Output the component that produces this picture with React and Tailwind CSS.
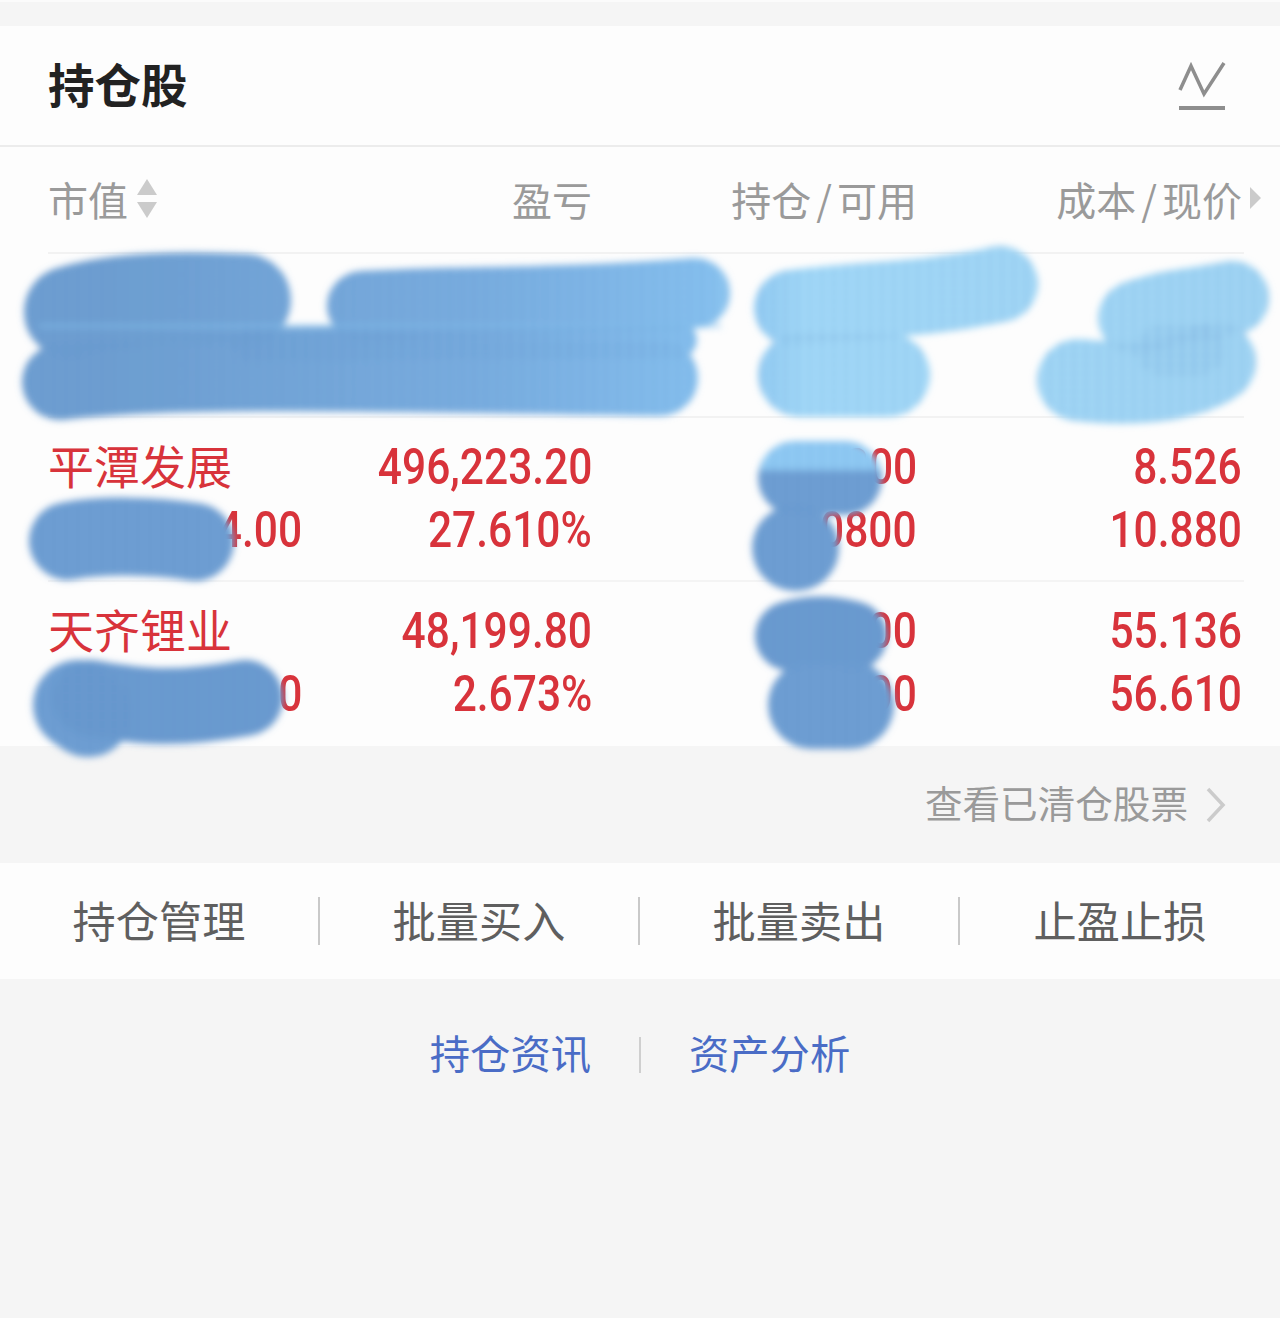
const cjk = "font-['Noto_Sans_CJK_SC','Noto_Sans',sans-serif]"
const figure = "inline-block origin-right scale-x-[0.85] font-['Roboto',sans-serif] text-[50px] font-medium leading-[63px]"

const holdings = [
  { name: '平潭发展', value: '4.00', profit: '496,223.20', rate: '27.610%', held: '800', usable: '0800', cost: '8.526', price: '10.880' },
  { name: '天齐锂业', value: '0', profit: '48,199.80', rate: '2.673%', held: '00', usable: '00', cost: '55.136', price: '56.610' },
]

const actions = ['持仓管理', '批量买入', '批量卖出', '止盈止损']

// thick marker strokes that sit on top of the table
const marks = [
  { d: 'M70 312 C110 300 170 296 245 300', w: 92, paint: 'url(#wash)' },
  { d: 'M362 306 C450 300 560 304 695 293', w: 70, paint: 'url(#wash)' },
  { d: 'M60 382 C160 370 300 372 660 378', w: 76, paint: 'url(#wash)' },
  { d: 'M250 345 L680 340', w: 34, paint: 'url(#wash)' },
  { d: 'M792 308 C850 300 930 300 1000 284', w: 76, paint: 'url(#wash)' },
  { d: 'M800 375 L888 375', w: 84, paint: 'url(#wash)' },
  { d: 'M1135 318 C1170 305 1200 305 1232 298', w: 74, paint: 'url(#wash)' },
  { d: 'M1078 380 C1120 385 1180 385 1215 362', w: 82, paint: 'url(#wash)' },
  { d: 'M1160 350 L1200 350', w: 50, paint: 'url(#wash)' },
  { d: 'M68 541 C100 535 150 535 195 542', w: 78, paint: '#6f9fd3' },
  { d: 'M795 478 L845 478', w: 74, paint: 'url(#band)' },
  { d: 'M795 548 L796 548', w: 86, paint: '#6f9fd3' },
  { d: 'M790 636 C810 630 830 630 852 636', w: 70, paint: '#6c9bd0' },
  { d: 'M812 705 L850 705', w: 88, paint: '#6f9fd3' },
  { d: 'M78 705 L88 712', w: 90, paint: '#6f9fd3' },
  { d: 'M90 698 C130 705 170 712 245 698', w: 76, paint: '#6c9bd0' },
]

const MarkerLayer = () => (
  <svg className="absolute left-0 top-0 pointer-events-none" width="1280" height="1318" viewBox="0 0 1280 1318" fill="none">
    <defs>
      <linearGradient id="wash" gradientUnits="userSpaceOnUse" x1="0" y1="0" x2="1280" y2="0">
        <stop offset="0.08" stopColor="#6f9fd1" />
        <stop offset="0.38" stopColor="#7cafe1" />
        <stop offset="0.55" stopColor="#88c2f0" />
        <stop offset="0.63" stopColor="#a6dcfa" />
        <stop offset="1" stopColor="#a4d8f6" />
      </linearGradient>
      <linearGradient id="band" gradientUnits="userSpaceOnUse" x1="0" y1="440" x2="0" y2="515">
        <stop offset="0.38" stopColor="#93cdf6" />
        <stop offset="0.42" stopColor="#6f9fd3" />
      </linearGradient>
      <pattern id="weave" width="12" height="9" patternUnits="userSpaceOnUse">
        <path d="M0 4.5H12" stroke="#4f86c4" strokeOpacity="0.2" strokeWidth="2" />
        <path d="M6 0V9" stroke="#4f86c4" strokeOpacity="0.2" strokeWidth="3" />
      </pattern>
      <filter id="soft" filterUnits="userSpaceOnUse" x="0" y="0" width="1280" height="1318">
        <feGaussianBlur stdDeviation="3.5" />
      </filter>
    </defs>
    <g filter="url(#soft)" strokeLinecap="round" strokeLinejoin="round">
      {marks.map((mark) => (
        <path key={mark.d} d={mark.d} stroke={mark.paint} strokeWidth={mark.w} />
      ))}
      {marks.map((mark) => (
        <path key={`${mark.d}-weave`} d={mark.d} stroke="url(#weave)" strokeWidth={mark.w} />
      ))}
      <path d="M40 326 H720" stroke="#86c2ee" strokeOpacity="0.7" strokeWidth="3" />
    </g>
  </svg>
)

const Row = ({ item }) => (
  <div className="grid h-[164px] grid-cols-[254px_290px_325px_325px] border-b-2 border-[#f4f4f4] pt-[18px] text-[#d8333b] last:border-b-0">
    <div className="flex flex-col">
      <span className={`${cjk} mb-[6px] text-[46px] leading-[57px]`}>{item.name}</span>
      <div className="text-right">
        <span className={figure}>{item.value}</span>
      </div>
    </div>
    {[[item.profit, item.rate], [item.held, item.usable], [item.cost, item.price]].map(([top, bottom]) => (
      <div key={top} className="flex flex-col text-right">
        <div><span className={figure}>{top}</span></div>
        <div><span className={figure}>{bottom}</span></div>
      </div>
    ))}
  </div>
)

export default function App() {
  return (
    <div className={`${cjk} relative h-[1318px] w-[1280px] overflow-hidden bg-[#f5f5f5]`}>
      <div className="h-[26px] border-t-2 border-[#fbfbfb]" />

      <section className="bg-[#fdfdfd]">
        <header className="flex h-[121px] items-center justify-between border-b-2 border-[#ececec] pl-12 pr-[54px]">
          <h2 className="mb-1 text-[46.5px] font-bold leading-none text-[#222222]">持仓股</h2>
          <svg width="48" height="50" viewBox="0 0 48 50" fill="none" stroke="#8e8e8e">
            <path d="M2 29 L13 5 L26 33 L46 2" strokeWidth="3.5" strokeLinejoin="miter" />
            <path d="M1 47 H47" strokeWidth="4" />
          </svg>
        </header>

        <div className="pl-12 pr-9">
          <div className="grid h-[107px] grid-cols-[254px_290px_325px_325px] items-center border-b-2 border-[#f2f2f2] pb-0.5 text-[40px] text-[#9a9a9a]">
            <div className="flex items-center gap-2">
              <span>市值</span>
              <svg width="22" height="40" viewBox="0 0 22 40" fill="#cbcbcb">
                <path d="M11 0 L21 16 H1 Z" />
                <path d="M1 23 H21 L11 39 Z" />
              </svg>
            </div>
            <div className="text-right">盈亏</div>
            <div className="text-right">持仓<span className="mx-[5px]">/</span>可用</div>
            <div className="relative text-right">
              成本<span className="mx-[5px]">/</span>现价
              <svg className="absolute -right-5 top-[17px]" width="13" height="24" viewBox="0 0 13 24" fill="#cbcbcb">
                <path d="M1 1 L12 12 L1 23 Z" />
              </svg>
            </div>
          </div>

          <div className="h-[164px] border-b-2 border-[#f2f2f2]" />
          {holdings.map((item) => (
            <Row key={item.name} item={item} />
          ))}
        </div>
      </section>

      <div className="flex h-[117px] items-center justify-end gap-[18px] pr-[54px] text-[37.6px] text-[#9a9a9a]">
        <span className="mb-1">查看已清仓股票</span>
        <svg width="20" height="36" viewBox="0 0 20 36" fill="none" stroke="#cbcbcb" strokeWidth="3.5">
          <path d="M2 2 L17 18 L2 34" />
        </svg>
      </div>

      <div className="grid h-[116px] grid-cols-4 items-center bg-[#fdfdfd] text-[43.2px] text-[#5f5f5f]">
        {actions.map((label, i) => (
          <div key={label} className={`flex h-[48px] items-center justify-center ${i < 3 ? 'border-r-2 border-[#c9c9c9]' : ''}`}>
            <span className="mb-1">{label}</span>
          </div>
        ))}
      </div>

      <div className="flex h-[154px] items-center justify-center pb-[3px] text-[40.3px] text-[#4a6cc6]">
        <span className="mb-1 pr-12">持仓资讯</span>
        <span className="h-[36px] w-0.5 bg-[#cfcfcf]" />
        <span className="mb-1 pl-12">资产分析</span>
      </div>

      <MarkerLayer />
    </div>
  )
}
